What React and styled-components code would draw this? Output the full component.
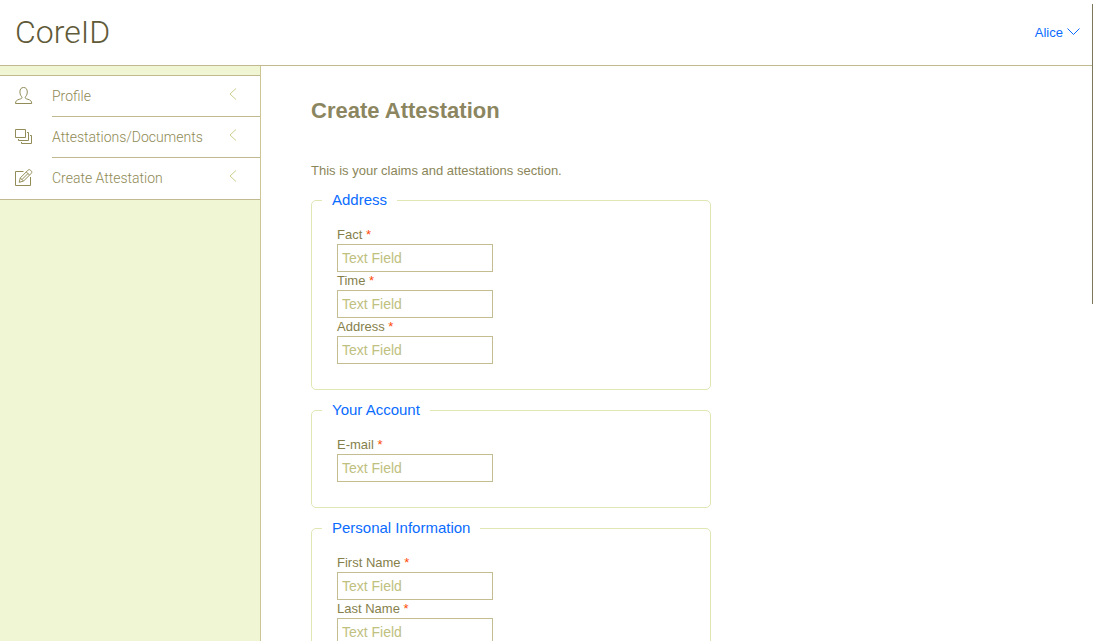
import React from "react";
import styled, { createGlobalStyle } from "styled-components";

const GlobalStyle = createGlobalStyle`
  *, *::before, *::after { box-sizing: border-box; }
  body {
    margin: 0;
    background: #fff;
    color: #857f4c;
    font: 13px/18px "Liberation Sans", Arial, sans-serif;
  }
`;

const Page = styled.div`
  position: relative;
  display: flex;
  flex-direction: column;
  height: 100vh;
  overflow: hidden;
`;

const Header = styled.header`
  display: flex;
  flex: none;
  align-items: center;
  justify-content: space-between;
  height: 66px;
  padding: 1px 13px 0 15px;
  border-bottom: 1px solid #c1ba90;
`;

const Brand = styled.div`
  padding-bottom: 2px;
  color: #5f5a38;
  font: 300 32px/40px Roboto, "Liberation Sans", sans-serif;
`;

const UserButton = styled.button`
  display: flex;
  align-items: center;
  gap: 4px;
  padding: 0;
  border: 0;
  background: none;
  color: #0a6cff;
  font: inherit;
  cursor: pointer;
  svg { margin-bottom: 2px; }
`;

const Body = styled.div`
  display: flex;
  flex: 1;
  min-height: 0;
`;

const Sidebar = styled.aside`
  flex: none;
  width: 261px;
  padding-top: 9px;
  border-right: 1px solid #cbc795;
  background: #f0f5d3;
`;

const Menu = styled.ul`
  margin: 0;
  padding: 0;
  border: solid #c1ba90;
  border-width: 1px 0;
  background: #fff;
  list-style: none;
`;

const MenuItem = styled.li`
  display: flex;
  &:last-child > a > span { border-color: transparent; }
`;

const MenuLink = styled.a`
  display: flex;
  flex: 1;
  align-items: center;
  padding-left: 14px;
  color: #8f8a55;
  font: 300 14px/20px Roboto, "Liberation Sans", sans-serif;
  text-decoration: none;
  > svg { margin-bottom: 1px; }
`;

const MenuLabel = styled.span`
  display: flex;
  flex: 1;
  align-items: center;
  justify-content: space-between;
  height: 41px;
  margin-left: 18px;
  padding-right: 22px;
  border-bottom: 1px solid #c1ba90;
  svg { margin-bottom: 4px; }
`;

const Main = styled.main`
  flex: 1;
  padding: 30px 50px;
  overflow-y: auto;
  scrollbar-width: none;
`;

const Title = styled.h1`
  margin: 0 0 36px;
  color: #8b865f;
  font-size: 22px;
  line-height: 30px;
`;

const Intro = styled.p`
  margin: 0 0 10px;
  color: #8b865a;
`;

const Group = styled.fieldset`
  max-width: 400px;
  margin: 0 0 10px;
  padding: 16px 10px 25px;
  border: 1px solid #e0e6b4;
  border-radius: 5px;
`;

const Legend = styled.legend`
  padding: 0 10px;
  color: #0a6cff;
  font-size: 15px;
  line-height: 20px;
`;

const Field = styled.div`
  padding: 0 15px;
`;

const Label = styled.label`
  display: block;
`;

const Required = styled.span`
  color: #ff4a08;
`;

const TextInput = styled.input`
  display: block;
  width: 156px;
  height: 28px;
  padding: 0 4px;
  border: 1px solid #c4bd92;
  border-radius: 0;
  background: #fff;
  color: #857f4c;
  font: 14px/18px "Liberation Sans", Arial, sans-serif;
  &::placeholder { color: #c0c07f; opacity: 1; }
`;

const ScrollThumb = styled.div`
  position: absolute;
  top: 4px;
  right: 0;
  width: 1px;
  height: 300px;
  background: #7d775b;
`;

const Icon = styled.svg`
  display: block;
  flex: none;
  fill: none;
  stroke: ${(p) => p.$color || "#918c58"};
  stroke-width: 1;
`;

const UserIcon = () => (
  <Icon width="20" height="20" viewBox="0 0 20 20" aria-hidden="true">
    <path d="M1.500 17.500c0-2.400 1.200-3.500 3.800-4.200 1.700-.5 2.700-.8 2.700-1.700 0-.7-.5-1-1.100-1.900-.6-1-1-2.100-1-3.600 0-3 1.300-4.600 3.700-4.600s3.700 1.600 3.700 4.600c0 1.500-.4 2.600-1 3.600-.6.9-1.100 1.200-1.100 1.900 0 .9 1 1.200 2.700 1.700 2.600.7 3.800 1.800 3.800 4.200z" />
  </Icon>
);

const StackIcon = () => (
  <Icon width="20" height="20" viewBox="0 0 20 20" aria-hidden="true">
    <path d="M1.500 2.500h10v8h-10zM13 5.500h1.500v8H4.500V12M16 8.500h1.500v8h-10V15" />
  </Icon>
);

const PencilIcon = () => (
  <Icon width="20" height="20" viewBox="0 0 20 20" aria-hidden="true">
    <path d="M9.500 3.500h-8v14h15V9" />
    <path d="M5.200 14.300l1.100-4.400 7.700-7.700c.8-.8 1.700-.8 2.500 0l.7.7c.8.8.8 1.700 0 2.500l-7.700 7.700zM6.300 9.900l3.200 3.200M12.300 3.900l3.200 3.200M14 5.500l-6 6" />
  </Icon>
);

const MENU = [
  { label: "Profile", icon: UserIcon },
  { label: "Attestations/Documents", icon: StackIcon },
  { label: "Create Attestation", icon: PencilIcon },
];

const GROUPS = [
  { title: "Address", fields: ["Fact", "Time", "Address"] },
  { title: "Your Account", fields: ["E-mail"] },
  { title: "Personal Information", fields: ["First Name", "Last Name"] },
];

export default function App() {
  return (
    <Page>
      <GlobalStyle />
      <Header>
        <Brand>CoreID</Brand>
        <UserButton type="button">
          Alice
          <Icon $color="#0a6cff" width="13" height="8" viewBox="0 0 13 8" aria-hidden="true">
            <path d="M.5.5l6 6 6-6" />
          </Icon>
        </UserButton>
      </Header>
      <Body>
        <Sidebar>
          <nav>
            <Menu>
              {MENU.map(({ label, icon: Glyph }) => (
                <MenuItem key={label}>
                  <MenuLink href="#">
                    <Glyph />
                    <MenuLabel>
                      {label}
                      <Icon $color="#cbcf8e" width="10" height="12" viewBox="0 0 10 12" aria-hidden="true">
                        <path d="M8 .5L2 6l6 5.500" />
                      </Icon>
                    </MenuLabel>
                  </MenuLink>
                </MenuItem>
              ))}
            </Menu>
          </nav>
        </Sidebar>
        <Main>
          <Title>Create Attestation</Title>
          <Intro>This is your claims and attestations section.</Intro>
          <form>
            {GROUPS.map((group) => (
              <Group key={group.title}>
                <Legend>{group.title}</Legend>
                {group.fields.map((name) => {
                  const id = `${group.title}-${name}`.toLowerCase().replace(/ /g, "-");
                  return (
                    <Field key={name}>
                      <Label htmlFor={id}>
                        {name} <Required>*</Required>
                      </Label>
                      <TextInput id={id} type="text" placeholder="Text Field" required />
                    </Field>
                  );
                })}
              </Group>
            ))}
          </form>
        </Main>
      </Body>
      <ScrollThumb />
    </Page>
  );
}
